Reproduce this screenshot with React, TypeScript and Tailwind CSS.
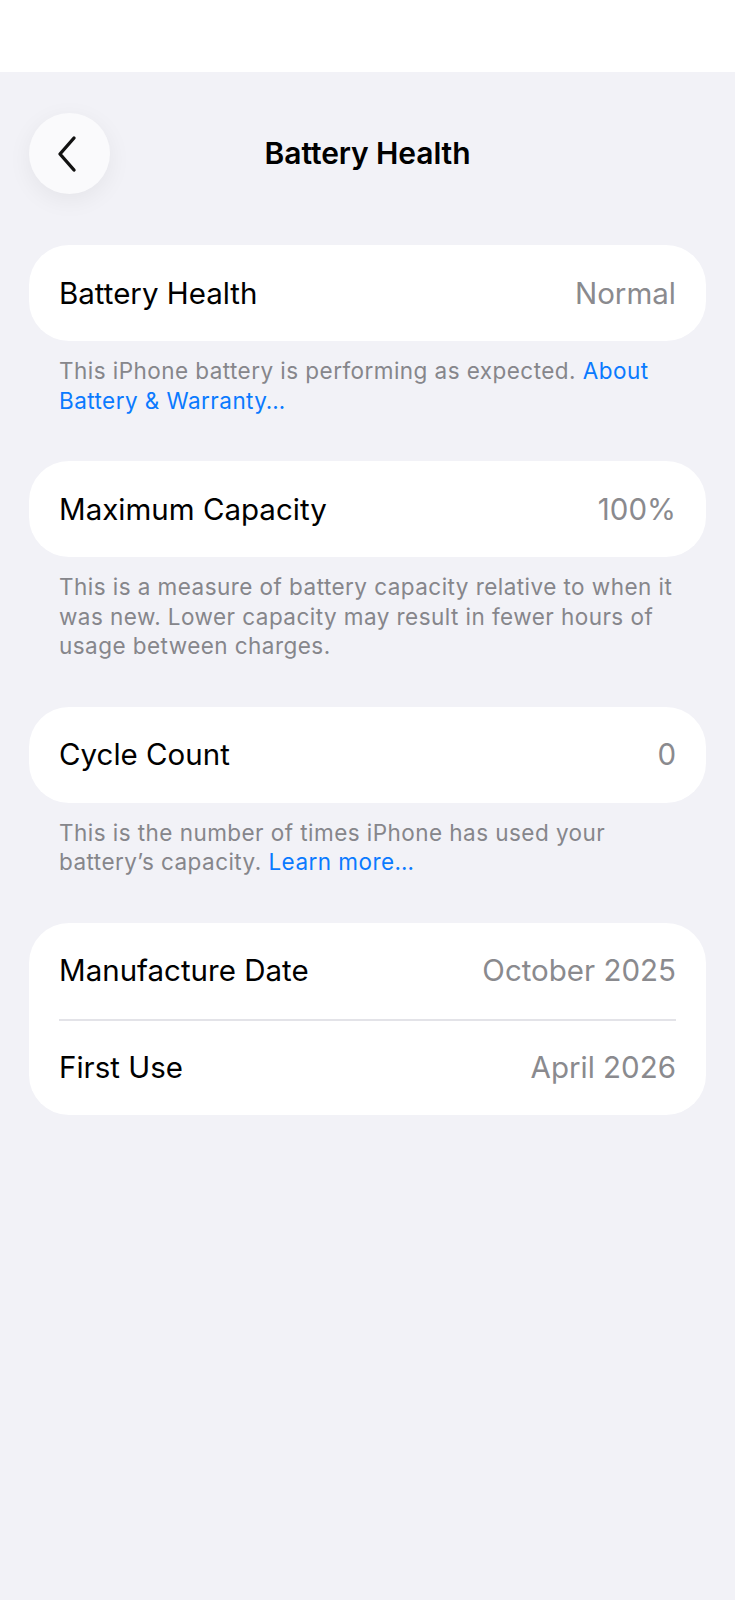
import React from 'react'

type Row = { label: string; value: string }

type Section = {
  rows: Row[]
  footer?: React.ReactNode
}

const font = { fontFamily: 'Inter, "Noto Sans", "Liberation Sans", sans-serif' }

function Link({ children }: { children: React.ReactNode }) {
  return <span className="text-[#0a7aff]">{children}</span>
}

const sections: Section[] = [
  {
    rows: [{ label: 'Battery Health', value: 'Normal' }],
    footer: (
      <>
        This iPhone battery is performing as expected. <Link>About Battery &amp; Warranty…</Link>
      </>
    ),
  },
  {
    rows: [{ label: 'Maximum Capacity', value: '100%' }],
    footer:
      'This is a measure of battery capacity relative to when it was new. Lower capacity may result in fewer hours of usage between charges.',
  },
  {
    rows: [{ label: 'Cycle Count', value: '0' }],
    footer: (
      <>
        This is the number of times iPhone has used your battery’s capacity. <Link>Learn more…</Link>
      </>
    ),
  },
  {
    rows: [
      { label: 'Manufacture Date', value: 'October 2025' },
      { label: 'First Use', value: 'April 2026' },
    ],
  },
]

function BackButton() {
  return (
    <button className="flex h-[81px] w-[81px] items-center justify-center rounded-full bg-[#fafafc] shadow-[0_6px_24px_rgba(0,0,0,0.06)]">
      <svg width="24" height="38" viewBox="0 0 24 38" fill="none" className="-ml-[6px]">
        <path d="M19 3 L5 19 L19 35" stroke="#111" strokeWidth="3.4" strokeLinecap="round" strokeLinejoin="round" />
      </svg>
    </button>
  )
}

export default function App() {
  return (
    <div className="min-h-[1600px] w-full bg-[#f2f2f7] text-black" style={font}>
      <div className="h-[72px] bg-white" />

      <div className="mt-[41px] grid grid-cols-[1fr_auto_1fr] items-center px-[29px]">
        <BackButton />
        <h1 className="text-[30px] font-semibold tracking-[-0.1px]">Battery Health</h1>
        <div />
      </div>

      <div className="mt-[51px] flex flex-col gap-[46px] px-[29px]">
        {sections.map((s, i) => (
          <div key={i}>
            <div className="rounded-[40px] bg-white px-[30px]">
              {s.rows.map((r, j) => (
                <div
                  key={r.label}
                  className={`flex h-[96px] items-center justify-between text-[29.5px] ${
                    j > 0 ? 'border-t-2 border-[#e3e3e8]' : ''
                  }`}
                >
                  <span>{r.label}</span>
                  <span className="text-[#8a8a8e]">{r.value}</span>
                </div>
              ))}
            </div>
            {s.footer && (
              <p className="mt-[15px] px-[30px] text-[22.5px] leading-[29.5px] tracking-[0.45px] text-[#86868b]">
                {s.footer}
              </p>
            )}
          </div>
        ))}
      </div>
    </div>
  )
}
